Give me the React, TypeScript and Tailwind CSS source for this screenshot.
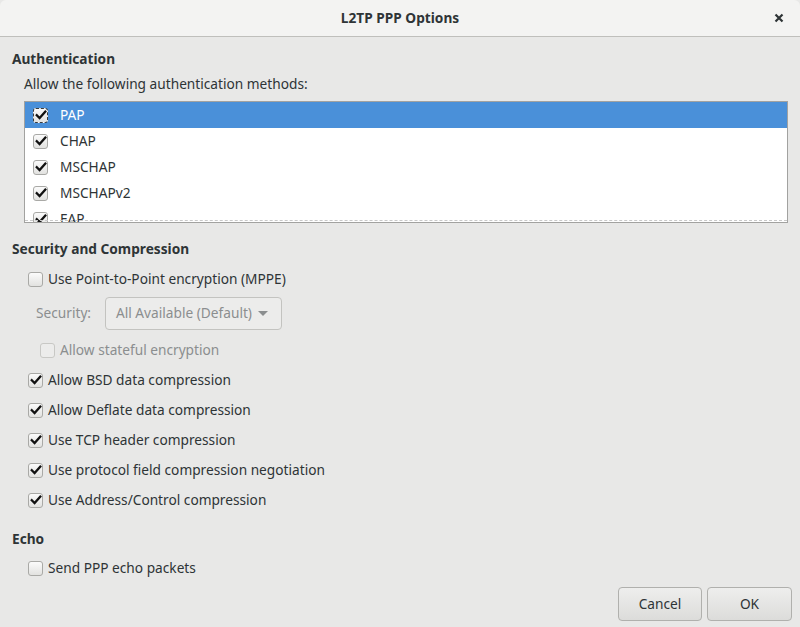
import React from "react";

const font = { fontFamily: '"Noto Sans", "Open Sans", sans-serif' };

function Check({ checked, disabled, focus }: { checked: boolean; disabled?: boolean; focus?: boolean }) {
  return (
    <span
      className={`relative inline-flex w-[15px] h-[15px] shrink-0 rounded-[3px] border ${
        disabled ? "border-[#c8c8c5] bg-[#ececeb]" : focus ? "border-[#3b3b3b] border-dashed bg-gradient-to-b from-[#fbfbfb] to-[#e2e2e0]" : "border-[#a9a9a6] bg-gradient-to-b from-[#fbfbfb] to-[#e2e2e0]"
      } items-center justify-center`}
    >
      {checked && (
        <svg width="12" height="12" viewBox="0 0 12 12">
          <path d="M1.8 6.2 L4.6 9 L10.3 2.6" fill="none" stroke="#111" strokeWidth="2.3" strokeLinecap="square" />
        </svg>
      )}
    </span>
  );
}

function CheckRow({ label, checked }: { label: string; checked: boolean }) {
  return (
    <div className="h-[30px] flex items-center pl-[28px] gap-[5px]">
      <Check checked={checked} />
      <span className="text-[#2e3436]">{label}</span>
    </div>
  );
}

export default function App() {
  const methods = ["PAP", "CHAP", "MSCHAP", "MSCHAPv2", "EAP"];
  return (
    <div className="w-[800px] h-[627px] bg-[#e8e8e7] flex flex-col text-[13.7px] overflow-hidden" style={font}>
      <div className="h-[37px] shrink-0 bg-[#f3f3f2] rounded-t-[6px] border-b border-[#bfbfbc] flex items-center relative">
        <div className="flex-1 text-center font-bold text-[#2e3436]">L2TP PPP Options</div>
        <svg className="absolute right-[16px] top-[13px]" width="10" height="10" viewBox="0 0 10 10">
          <path d="M1.5 1.5 L8.5 8.5 M8.5 1.5 L1.5 8.5" stroke="#2e3436" strokeWidth="2.2" />
        </svg>
      </div>
      <div className="flex-1 flex flex-col px-[12px]">
        <div className="font-bold text-[#2e3436] mt-[12px] leading-[20px]">Authentication</div>
        <div className="pl-[12px] mt-[5px] leading-[20px] text-[#2e3436]">Allow the following authentication methods:</div>
        <div className="ml-[12px] mt-[7px] h-[122px] border border-[#a2a2a0] bg-white overflow-hidden relative">
          {methods.map((m, i) => (
            <div
              key={m}
              className={`h-[26px] shrink-0 flex items-center pl-[8px] gap-[12px] ${i === 0 ? "bg-[#4a90d9] text-white" : "text-[#2e3436]"}`}
            >
              <Check checked focus={i === 0} />
              <span className="whitespace-nowrap">{m}</span>
            </div>
          ))}
          <div className="absolute left-0 right-0 bottom-[1px] border-b border-dashed border-[#c9c9c9]" />
        </div>
        <div className="font-bold text-[#2e3436] mt-[16px] leading-[20px]">Security and Compression</div>
        <div className="h-[30px] flex items-center pl-[16px] gap-[5px] mt-[5px]">
          <Check checked={false} />
          <span className="text-[#2e3436]">Use Point-to-Point encryption (MPPE)</span>
        </div>
        <div className="flex items-center pl-[24px] mt-[3px] h-[33px]">
          <span className="text-[#8b8e8f] w-[69px]">Security:</span>
          <div className="w-[177px] h-[33px] border border-[#c3c3c0] rounded-[4px] bg-[#ececeb] flex items-center pl-[10px] text-[#8b8e8f]">
            <span>All Available (Default)</span>
            <svg className="ml-[6px]" width="10" height="6" viewBox="0 0 10 6">
              <path d="M0 0 L10 0 L5 5 Z" fill="#8b8e8f" />
            </svg>
          </div>
        </div>
        <div className="h-[30px] mt-[5px] flex items-center pl-[28px] gap-[5px]">
          <Check checked={false} disabled />
          <span className="text-[#8b8e8f]">Allow stateful encryption</span>
        </div>
        <div className="flex flex-col -ml-[12px]">
          <CheckRow label="Allow BSD data compression" checked />
          <CheckRow label="Allow Deflate data compression" checked />
          <CheckRow label="Use TCP header compression" checked />
          <CheckRow label="Use protocol field compression negotiation" checked />
          <CheckRow label="Use Address/Control compression" checked />
        </div>
        <div className="font-bold text-[#2e3436] mt-[14px] leading-[20px]">Echo</div>
        <div className="h-[30px] flex items-center pl-[16px] gap-[5px] mt-[4px]">
          <Check checked={false} />
          <span className="text-[#2e3436]">Send PPP echo packets</span>
        </div>
        <div className="flex justify-end gap-[5px] mt-[4px] -mr-[4px]">
          <button className="w-[84px] h-[34px] rounded-[4px] border border-[#b0b0ad] bg-gradient-to-b from-[#eeeeed] to-[#dcdcda] text-[#2e3436]">Cancel</button>
          <button className="w-[85px] h-[34px] rounded-[4px] border border-[#b0b0ad] bg-gradient-to-b from-[#eeeeed] to-[#dcdcda] text-[#2e3436]">OK</button>
        </div>
      </div>
    </div>
  );
}
